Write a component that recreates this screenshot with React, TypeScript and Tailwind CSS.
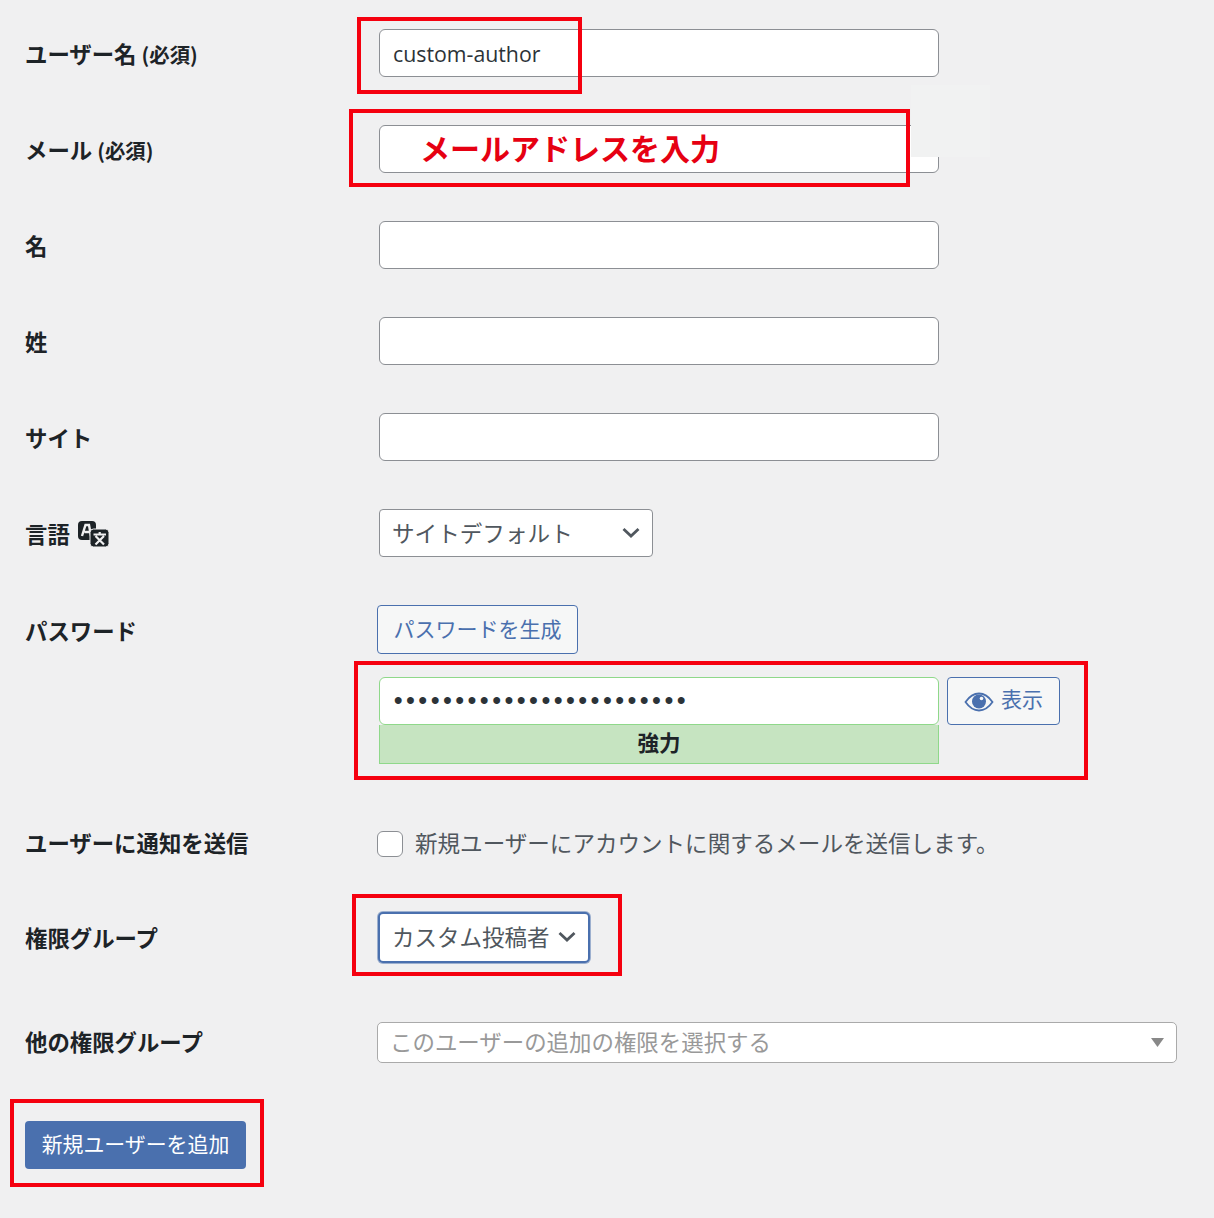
const font = "font-['Noto_Sans_CJK_JP','Noto_Sans',sans-serif]";

function Chevron() {
  return (
    <svg width="20" height="20" viewBox="0 0 20 20" className="shrink-0">
      <path d="M2.5 6 L10 13 L17.5 6" fill="none" stroke="#50575e" strokeWidth="2.8" />
    </svg>
  );
}

function Field({ label }: { label: string }) {
  return (
    <div className="flex items-center h-[48px] mb-[48px]">
      <Label>{label}</Label>
      <input
        readOnly
        className="w-[560px] h-[48px] bg-white border border-[#8c8f94] rounded-[6px] px-[13px] text-[22px] text-[#2c3338]"
      />
    </div>
  );
}

function Label({ children, className = "" }: { children: React.ReactNode; className?: string }) {
  return (
    <div className={`w-[379px] shrink-0 pl-[25px] text-[22.4px] leading-[30px] font-bold text-[#1d2327] ${className}`}>
      {children}
    </div>
  );
}

function Mark({ className }: { className: string }) {
  return <div className={`absolute border-[4px] border-[#f5000f] pointer-events-none ${className}`} />;
}

export default function App() {
  return (
    <div className={`relative w-[1214px] h-[1218px] overflow-hidden bg-[#f0f0f1] pt-[29px] ${font}`}>
      <div className="flex items-center h-[48px] mb-[48px]">
        <Label className="mt-[1px]">
          ユーザー名 <span className="text-[20.4px]">(必須)</span>
        </Label>
        <input
          readOnly
          value="custom-author"
          className="w-[560px] h-[48px] bg-white border border-[#8c8f94] rounded-[6px] px-[13px] text-[21.3px] text-[#2c3338] font-['Open_Sans',sans-serif]"
        />
      </div>
      <div className="flex items-center h-[48px] mb-[48px]">
        <Label className="mt-[1px]">
          メール <span className="text-[20.4px]">(必須)</span>
        </Label>
        <input
          readOnly
          className="w-[560px] h-[48px] bg-white border border-[#8c8f94] rounded-[6px] px-[13px] text-[20.8px]"
        />
      </div>
      <Field label="名" />
      <Field label="姓" />
      <Field label="サイト" />

      <div className="flex items-center h-[48px] mb-[48px]">
        <Label>
          <span className="inline-flex items-center gap-[8px]">
            言語
            <svg width="32" height="27" viewBox="0 0 32 27" className="mt-[2px]">
              <rect x="0" y="0" width="18" height="19" rx="4" fill="#1d2327" />
              <path d="M4 15 L7.5 4 H11 L13 15 M6.5 11 H12" fill="none" stroke="#f0f0f1" strokeWidth="2.4" />
              <rect x="12" y="8" width="19" height="18" rx="3.5" fill="#1d2327" stroke="#f0f0f1" strokeWidth="1" />
              <path d="M17.5 15 L26 23.5 M26 15 L17.5 23.5 M15.5 13.5 H28 M21.7 11 V13.5" fill="none" stroke="#f0f0f1" strokeWidth="2.2" />
            </svg>
          </span>
        </Label>
        <div className="w-[274px] h-[48px] flex items-center justify-between bg-white border border-[#8c8f94] rounded-[4px] pl-[12px] pr-[11px] text-[22.6px] text-[#50575e]">
          <span>サイトデフォルト</span>
          <Chevron />
        </div>
      </div>

      <div className="flex items-start mb-[66px]">
        <div className="h-[49px] flex items-center">
          <Label>パスワード</Label>
        </div>
        <div className="flex flex-col">
          <button className="-ml-[2px] w-[201px] h-[49px] pb-[2px] bg-[#f6f7f7] border border-[#4a70ae] rounded-[4px] text-[21px] text-[#4a70ae]">
            パスワードを生成
          </button>
          <div className="flex mt-[23px] gap-[8px]">
            <div className="w-[560px] flex flex-col">
              <input
                readOnly
                type="password"
                value="aaaaaaaaaaaaaaaaaaaaaaaa"
                className="w-full h-[48px] pt-[2px] bg-white border border-[#8fd88a] rounded-[6px] px-[11px] text-[24px] font-bold tracking-[-2.1px] text-[#2c3338] font-['Liberation_Mono',monospace]"
              />
              <div className="h-[39px] pb-[3px] flex items-center justify-center bg-[#c6e4c1] border border-t-0 border-[#8fd88a] text-[21.5px] font-bold text-[#1d2327]">
                強力
              </div>
            </div>
            <button className="w-[113px] h-[48px] flex items-center justify-center gap-[7px] bg-[#f6f7f7] border border-[#4a70ae] rounded-[4px] text-[21px] text-[#4a70ae]">
              <svg width="30" height="20" viewBox="0 0 30 20" className="mt-[2px]">
                <path d="M1.5 10 C6 3.5 10 1.5 15 1.5 C20 1.5 24 3.5 28.5 10 C24 16.5 20 18.5 15 18.5 C10 18.5 6 16.5 1.5 10 Z" fill="none" stroke="#4a70ae" strokeWidth="1.8" />
                <circle cx="15" cy="9.5" r="7" fill="#4a70ae" />
                <circle cx="17.5" cy="6.5" r="1.8" fill="#f6f7f7" />
              </svg>
              <span className="-mt-[4px]">表示</span>
            </button>
          </div>
        </div>
      </div>

      <div className="flex items-center h-[28px] mb-[54px]">
        <Label className="-mt-[5px]">ユーザーに通知を送信</Label>
        <div className="flex items-center -ml-[2px] gap-[12px] text-[22.55px] text-[#50575e]">
          <input type="checkbox" readOnly className="appearance-none w-[26px] h-[26px] bg-white border border-[#8c8f94] rounded-[6px]" />
          <span className="-mt-[2px]">新規ユーザーにアカウントに関するメールを送信します。</span>
        </div>
      </div>

      <div className="flex items-center h-[50px] mb-[60px]">
        <Label className="-mt-[1px]">権限グループ</Label>
        <div className="-ml-[1px] w-[212px] h-[51px] flex items-center justify-between bg-white border-[2px] border-[#4a70ae] rounded-[5px] shadow-[0_0_0_1px_#4a70ae80] pl-[12px] pr-[11px] text-[22.5px] text-[#50575e]">
          <span>カスタム投稿者</span>
          <Chevron />
        </div>
      </div>

      <div className="flex items-center h-[41px] mb-[58px]">
        <Label className="-mt-[4px]">他の権限グループ</Label>
        <div className="-ml-[2px] w-[800px] h-[41px] flex items-center justify-between bg-white border border-[#aaaaaa] rounded-[5px] pl-[12px] pr-[12px] text-[22.45px] text-[#999999]">
          <span className="-mt-[1px]">このユーザーの追加の権限を選択する</span>
          <svg width="13" height="9" viewBox="0 0 13 9">
            <path d="M0 0 H13 L6.5 9 Z" fill="#888888" />
          </svg>
        </div>
      </div>

      <button className="ml-[25px] w-[221px] h-[48px] pb-[2px] bg-[#4a70ae] rounded-[4px] text-[20.9px] text-white">
        新規ユーザーを追加
      </button>

      <div className="absolute left-[911px] top-[85px] w-[79px] h-[72px] bg-[#f1f2f2]" />
      <div className="absolute left-[420px] top-[123px] text-[30px] leading-[48px] font-bold text-[#e60012]">
        メールアドレスを入力
      </div>
      <Mark className="left-[357px] top-[17px] w-[225px] h-[77px]" />
      <Mark className="left-[349px] top-[109px] w-[561px] h-[78px]" />
      <Mark className="left-[354px] top-[661px] w-[734px] h-[119px]" />
      <Mark className="left-[352px] top-[894px] w-[270px] h-[82px]" />
      <Mark className="left-[10px] top-[1099px] w-[254px] h-[88px]" />
    </div>
  );
}
